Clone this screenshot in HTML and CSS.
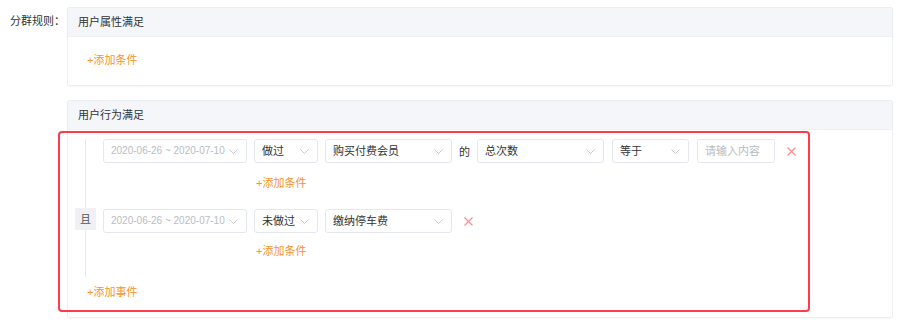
FILE: index.html
```html
<!DOCTYPE html>
<html lang="zh-CN">
<head>
    <meta charset="UTF-8">
    <title>分群规则</title>
    <link rel="stylesheet" href="styles.css">
</head>
<body>
    <div class="page">
        <div class="form-row">
            <div class="form-label">分群规则：</div>
            <div class="form-content">
                <div class="card">
                    <div class="card-header">用户属性满足</div>
                    <div class="card-body attr-body">
                        <a class="link-add">+添加条件</a>
                    </div>
                </div>

                <div class="card">
                    <div class="card-header">用户行为满足</div>
                    <div class="card-body behavior-body">
                        <div class="event-list">
                            <div class="event">
                                <div class="event-row">
                                    <div class="ctl ctl-date muted">2020-06-26 ~ 2020-07-10<svg class="arrow" viewBox="0 0 9 5"><path d="M0.5 0.5 L4.5 4.5 L8.5 0.5"/></svg></div>
                                    <div class="ctl ctl-do">做过<svg class="arrow" viewBox="0 0 9 5"><path d="M0.5 0.5 L4.5 4.5 L8.5 0.5"/></svg></div>
                                    <div class="ctl ctl-event">购买付费会员<svg class="arrow" viewBox="0 0 9 5"><path d="M0.5 0.5 L4.5 4.5 L8.5 0.5"/></svg></div>
                                    <span class="word">的</span>
                                    <div class="ctl ctl-event">总次数<svg class="arrow" viewBox="0 0 9 5"><path d="M0.5 0.5 L4.5 4.5 L8.5 0.5"/></svg></div>
                                    <div class="ctl ctl-op">等于<svg class="arrow" viewBox="0 0 9 5"><path d="M0.5 0.5 L4.5 4.5 L8.5 0.5"/></svg></div>
                                    <div class="ctl ctl-input muted">请输入内容</div>
                                    <svg class="del" viewBox="0 0 9 9"><path d="M0.5 0.5 L8.5 8.5 M8.5 0.5 L0.5 8.5"/></svg>
                                </div>
                                <a class="link-add sub-add">+添加条件</a>
                            </div>
                            <div class="event">
                                <span class="and-tag">且</span>
                                <div class="event-row">
                                    <div class="ctl ctl-date muted">2020-06-26 ~ 2020-07-10<svg class="arrow" viewBox="0 0 9 5"><path d="M0.5 0.5 L4.5 4.5 L8.5 0.5"/></svg></div>
                                    <div class="ctl ctl-do">未做过<svg class="arrow" viewBox="0 0 9 5"><path d="M0.5 0.5 L4.5 4.5 L8.5 0.5"/></svg></div>
                                    <div class="ctl ctl-event">缴纳停车费<svg class="arrow" viewBox="0 0 9 5"><path d="M0.5 0.5 L4.5 4.5 L8.5 0.5"/></svg></div>
                                    <svg class="del" viewBox="0 0 9 9"><path d="M0.5 0.5 L8.5 8.5 M8.5 0.5 L0.5 8.5"/></svg>
                                </div>
                                <a class="link-add sub-add">+添加条件</a>
                            </div>
                        </div>
                        <a class="link-add event-add">+添加事件</a>
                    </div>
                </div>
            </div>
        </div>
        <div class="highlight"></div>
    </div>
</body>
</html>
```

FILE: styles.css
```css
body {
    margin: 0;
    padding: 0;
    background-color: #fff;
    font-family: "Liberation Sans", "Noto Sans CJK SC", sans-serif;
    font-size: 11px;
    color: #333;
}
.page {
    position: relative;
    width: 899px;
    height: 335px;
}
.form-row {
    display: flex;
    padding-top: 7px;
}
.form-label {
    width: 57px;
    padding-left: 10px;
    line-height: 29px;
    white-space: nowrap;
    color: #333;
}
.form-content {
    width: 826px;
}
.card {
    border: 1px solid #eceef2;
    border-radius: 2px;
    box-shadow: 0 1px 2px rgba(0,0,0,0.04);
    margin-bottom: 14px;
}
.card-header {
    height: 28px;
    line-height: 28px;
    padding-left: 10px;
    background-color: #f5f6fa;
    border-bottom: 1px solid #eef0f4;
    color: #333;
}
.attr-body {
    height: 48px;
    padding-left: 19px;
}
.attr-body .link-add {
    display: block;
    padding-top: 15px;
}
.link-add {
    color: #f7932b;
    line-height: 16px;
    cursor: pointer;
}
.behavior-body {
    padding: 9px 0 17px 0;
}
.event-list {
    margin-left: 17px;
    border-left: 1px solid #e9ebef;
    padding-left: 17px;
    padding-bottom: 18px;
}
.event {
    position: relative;
}
.event + .event {
    margin-top: 18px;
}
.event-row {
    display: flex;
    align-items: center;
    height: 24px;
}
.ctl {
    position: relative;
    box-sizing: border-box;
    height: 24px;
    line-height: 22px;
    border: 1px solid #e4e7ed;
    border-radius: 3px;
    padding-left: 7px;
    margin-right: 7px;
    color: #333;
    white-space: nowrap;
}
.muted {
    color: #b8bcc4;
}
.ctl-date { width: 144px; font-size: 10px; }
.ctl-do { width: 64px; }
.ctl-event { width: 127px; }
.ctl-op { width: 77px; margin-left: 1px; }
.ctl-input { width: 78px; margin-left: 1px; }
.arrow {
    position: absolute;
    right: 8px;
    top: 9px;
    width: 9px;
    height: 5px;
    fill: none;
    stroke: #c4c8cf;
    stroke-width: 1;
}
.word {
    margin-right: 7px;
    color: #333;
}
.del {
    width: 9px;
    height: 9px;
    margin-left: 5px;
    fill: none;
    stroke: #f58f8f;
    stroke-width: 1.2;
}
.and-tag {
    position: absolute;
    left: -28px;
    top: -1px;
    width: 21px;
    height: 22px;
    line-height: 22px;
    text-align: center;
    background-color: #f0f1f4;
    color: #555;
}
.sub-add {
    display: block;
    margin: 12px 0 0 153px;
}
.event + .event .sub-add {
    margin-top: 10px;
}
.event-add {
    display: block;
    margin: 7px 0 0 19px;
}
.highlight {
    position: absolute;
    left: 58px;
    top: 131px;
    width: 748px;
    height: 177px;
    border: 2px solid #ff3b4b;
    border-radius: 4px;
}
```
